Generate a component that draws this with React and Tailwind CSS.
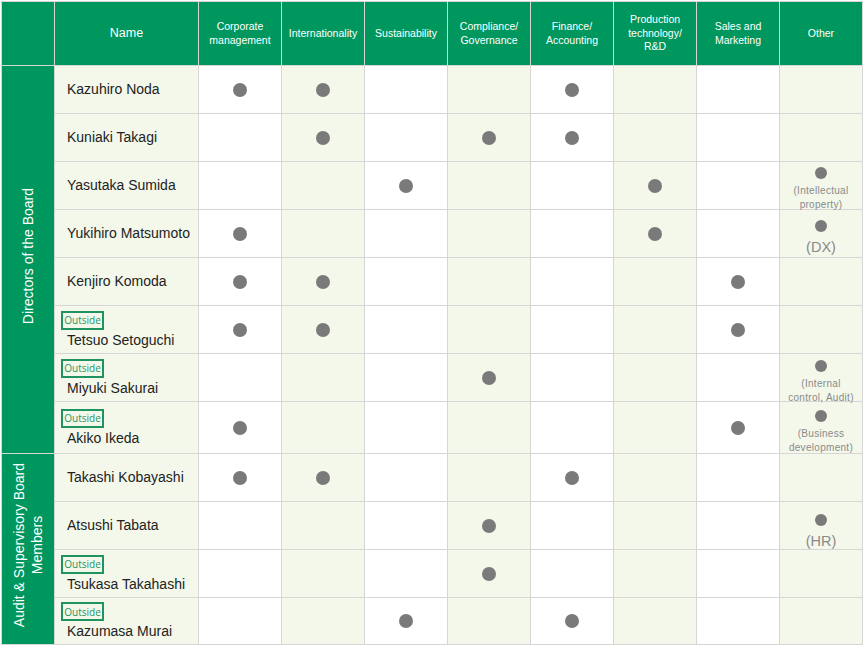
const HEADERS = [
  ['Corporate', 'management'],
  ['Internationality'],
  ['Sustainability'],
  ['Compliance/', 'Governance'],
  ['Finance/', 'Accounting'],
  ['Production', 'technology/', 'R&D'],
  ['Sales and', 'Marketing'],
  ['Other'],
]

// dots: indexes into the first seven skill columns; other goes in the last column
const GROUPS = [
  {
    label: ['Directors of the Board'],
    rows: [
      { name: 'Kazuhiro Noda', dots: [0, 1, 4] },
      { name: 'Kuniaki Takagi', dots: [1, 3, 4] },
      { name: 'Yasutaka Sumida', dots: [2, 5], other: { lines: ['(Intellectual', 'property)'], pt: 'pt-[5px]' } },
      { name: 'Yukihiro Matsumoto', dots: [0, 5], other: { lines: ['(DX)'], big: true, pt: 'pt-[10px]' } },
      { name: 'Kenjiro Komoda', dots: [0, 1, 6] },
      { name: 'Tetsuo Setoguchi', outside: true, dots: [0, 1, 6] },
      { name: 'Miyuki Sakurai', outside: true, dots: [3], other: { lines: ['(Internal', 'control, Audit)'], pt: 'pt-[6px]' } },
      { name: 'Akiko Ikeda', outside: true, dots: [0, 6], other: { lines: ['(Business', 'development)'], pt: 'pt-[8px]' }, h: 'h-[52px]' },
    ],
  },
  {
    label: ['Audit & Supervisory Board', 'Members'],
    rows: [
      { name: 'Takashi Kobayashi', dots: [0, 1, 4] },
      { name: 'Atsushi Tabata', dots: [3], other: { lines: ['(HR)'], big: true, pt: 'pt-[12px]' } },
      { name: 'Tsukasa Takahashi', outside: true, dots: [3] },
      { name: 'Kazumasa Murai', outside: true, dots: [2, 4], h: 'h-[47px]' },
    ],
  },
]

const cell = 'border border-[#d6d6d6] p-0'

function Dot() {
  return (
    <div className="flex justify-center">
      <span className="size-[14px] rounded-full bg-[#7a7a7a]" />
    </div>
  )
}

function OtherCell({ other }) {
  if (!other) return <td className={`${cell} bg-[#f3f8eb]`} />
  return (
    <td className={`${cell} bg-[#f3f8eb] align-top ${other.pt}`}>
      <div className="flex flex-col items-center text-center text-[#8a8a8a]">
        <span className="size-[12px] rounded-full bg-[#7a7a7a]" />
        {other.big ? (
          <div className="mt-[7px] -mb-[8px] text-[14.5px] leading-[17px]">{other.lines[0]}</div>
        ) : (
          <div className="mt-[5px] -mb-[8px] text-[10px] leading-[13.5px] tracking-[0.3px]">
            {other.lines.map((l) => (
              <div key={l}>{l}</div>
            ))}
          </div>
        )}
      </div>
    </td>
  )
}

function NameCell({ row }) {
  return (
    <td className={`${cell} bg-[#f3f8eb] align-middle pl-[12px]`}>
      {row.outside ? (
        <div>
          <div className="ml-[-6px] flex h-[19px] w-[43px] items-center justify-center border-2 border-[#1f9462] font-['Open_Sans',sans-serif] text-[10px] leading-none text-[#1f9462]">
            Outside
          </div>
          <div className="mt-[2px] text-[14px] leading-[17px]">{row.name}</div>
        </div>
      ) : (
        <div className="text-[14px] leading-[17px]">{row.name}</div>
      )}
    </td>
  )
}

export default function App() {
  return (
    <div className="bg-white p-px font-['Liberation_Sans',Arial,sans-serif] text-[#222]">
      <table className="w-[861px] table-fixed border-collapse">
        <colgroup>
          <col className="w-[53px]" />
          <col className="w-[144px]" />
          {HEADERS.map((_, i) => (
            <col key={i} className="w-[83px]" />
          ))}
        </colgroup>
        <thead>
          <tr className="h-[64px] bg-[#00975e] text-white">
            <th className={cell} />
            <th className={`${cell} text-[12.5px] font-normal`}>Name</th>
            {HEADERS.map((lines) => (
              <th key={lines[0]} className={`${cell} text-[10.5px] font-normal leading-[13.5px]`}>
                {lines.map((l) => (
                  <div key={l}>{l}</div>
                ))}
              </th>
            ))}
          </tr>
        </thead>
        <tbody>
          {GROUPS.map((group) =>
            group.rows.map((row, ri) => (
              <tr key={row.name} className={row.h || 'h-[48px]'}>
                {ri === 0 && (
                  <td rowSpan={group.rows.length} className={`${cell} bg-[#00975e] text-center align-middle text-white`}>
                    <span className="inline-block rotate-180 text-center text-[14px] leading-[18px] [writing-mode:vertical-rl]">
                      {group.label.map((l) => (
                        <div key={l}>{l}</div>
                      ))}
                    </span>
                  </td>
                )}
                <NameCell row={row} />
                {HEADERS.slice(0, 7).map((_, ci) => (
                  <td key={ci} className={`${cell} align-middle ${ci % 2 === 0 ? 'bg-white' : 'bg-[#f3f8eb]'}`}>
                    {row.dots.includes(ci) && <Dot />}
                  </td>
                ))}
                <OtherCell other={row.other} />
              </tr>
            ))
          )}
        </tbody>
      </table>
    </div>
  )
}
